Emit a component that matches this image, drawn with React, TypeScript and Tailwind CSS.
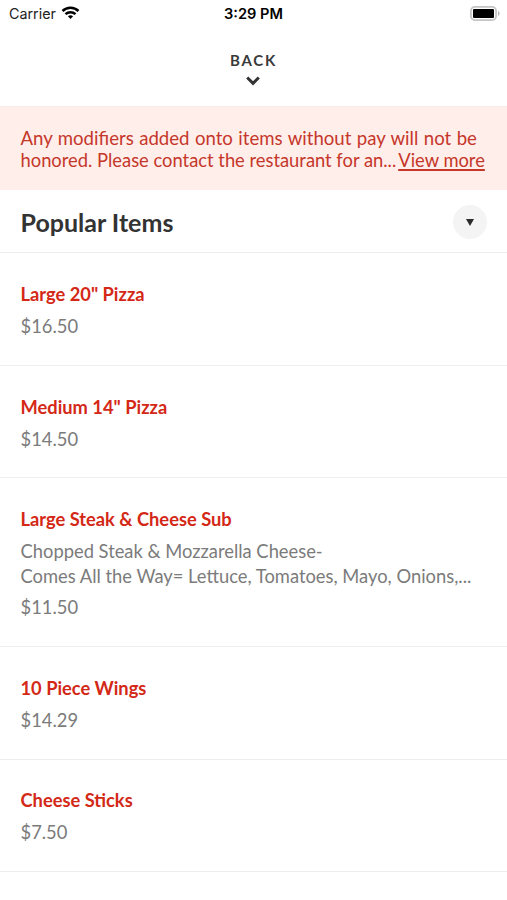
const items = [
  { name: 'Large 20" Pizza', price: '$16.50' },
  { name: 'Medium 14" Pizza', price: '$14.50' },
  {
    name: 'Large Steak & Cheese Sub',
    lines: ['Chopped Steak & Mozzarella Cheese-', 'Comes All the Way= Lettuce, Tomatoes, Mayo, Onions,...'],
    price: '$11.50',
  },
  { name: '10 Piece Wings', price: '$14.29' },
  { name: 'Cheese Sticks', price: '$7.50' },
];

function StatusBar() {
  return (
    <div className="grid h-7 grid-cols-3 items-center pr-[7px] pl-[9px] font-['Inter',sans-serif] text-[14px] text-black">
      <div className="flex items-center gap-[5px]">
        <span className="text-[14.3px] text-[#222]">Carrier</span>
        <svg className="mt-[-2px]" width="19" height="14" viewBox="0 0 18 14" fill="none" stroke="#000" strokeWidth="2.5">
          <path d="M1 5C5.5.7 12.5.7 17 5" />
          <path d="M4 8.2c2.8-2.7 7.2-2.7 10 0" />
          <path d="M6.4 10.3c1.5-1.3 3.7-1.3 5.2 0L9 13z" fill="#000" stroke="none" />
        </svg>
      </div>
      <span className="-ml-0.5 pt-[2px] text-center text-[14.6px] font-semibold whitespace-nowrap">3:29 PM</span>
      <svg className="mt-[-2px] justify-self-end" width="30" height="15" viewBox="0 0 30 15">
        <rect x=".9" y=".9" width="25.2" height="13.2" rx="4" fill="none" stroke="#c4c4c4" strokeWidth="1.8" />
        <rect x="3" y="3" width="21" height="9" rx="1" />
        <path d="M28 5c2 .8 2 4.2 0 5z" fill="#b5b5b5" />
      </svg>
    </div>
  );
}

export default function App() {
  return (
    <main className="h-[900px] w-[507px] overflow-hidden bg-white font-['Lato',sans-serif] text-[18.35px] text-[#7b7b7b]">
      <StatusBar />
      <header className="flex h-[78px] flex-col items-center pt-[22px] text-[#3a3a3a]">
        <span className="text-[15px] leading-5 font-bold tracking-[1.7px]">BACK</span>
        <svg className="mt-1.5 mr-[1px]" width="14" height="10" viewBox="0 0 14 10" fill="none" stroke="#333" strokeWidth="3">
          <path d="m1.2 1.5 5.8 5.8 5.8-5.8" />
        </svg>
      </header>
      <section className="h-[84px] border-t border-[#f8ecea] bg-[#ffeeea] px-[20.5px] pt-5 leading-[22px] whitespace-nowrap text-[#c5372a]">
        <p className="text-[18.6px] [word-spacing:0.7px]">Any modifiers added onto items without pay will not be</p>
        <p>
          honored. Please contact the restaurant for an...
          <span className="ml-[2px] underline decoration-[1.5px] underline-offset-[2px] [text-decoration-skip-ink:none]">View more</span>
        </p>
      </section>
      <section className="flex h-[63.4px] items-center justify-between border-b border-[#eee] pr-[20px] pl-[20.5px]">
        <h1 className="pt-[3px] text-[25px] font-bold text-[#333]">Popular Items</h1>
        <button className="mt-[2px] flex size-[34px] items-center justify-center rounded-full bg-[#f4f4f4]">
          <svg width="8" height="7" viewBox="0 0 8 7"><path d="M0 0h8L4 7z" fill="#2b2b2b" /></svg>
        </button>
      </section>
      {items.map((item) => (
        <article key={item.name} className="border-b border-[#eee] px-[20.5px] pt-[27.8px] pb-[25.8px]">
          <h2 className="text-[18.3px] leading-[27px] font-bold text-[#d42817]">{item.name}</h2>
          {item.lines && (
            <div className="mt-[6.2px] leading-[25px] whitespace-nowrap">
              {item.lines.map((line) => <p key={line}>{line}</p>)}
            </div>
          )}
          <p className="mt-[5.9px] leading-[25px]">{item.price}</p>
        </article>
      ))}
    </main>
  );
}
